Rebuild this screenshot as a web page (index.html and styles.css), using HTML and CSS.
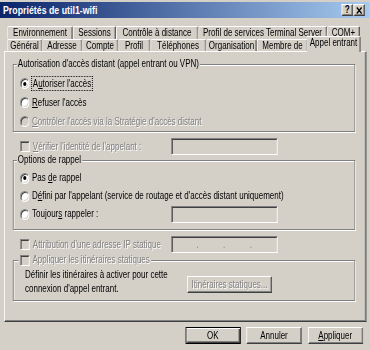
FILE: index.html
```html
<!DOCTYPE html>
<html>
	<head>
		<meta charset="utf-8" />
		<title>Propriétés de util1-wifi</title>
		<link rel="stylesheet" href="styles.css">
	</head>
	<body>
		<div id="screen">
		<div id="dialog">
			<div class="titlebar">
				<span class="caption">Propriétés de util1-wifi</span>
				<span class="tbtn">?</span>
				<span class="tbtn"><svg width="8" height="7" viewBox="0 0 8 7"><path d="M1 0.5L7 6.5M7 0.5L1 6.5" stroke="#000" stroke-width="1.6"/></svg></span>
			</div>
			<div class="tabs">
				<div class="tabrow back">
					<div class="tab">Environnement</div>
					<div class="tab">Sessions</div>
					<div class="tab">Contrôle à distance</div>
					<div class="tab">Profil de services Terminal Server</div>
					<div class="tab">COM+</div>
				</div>
				<div class="tabrow front">
					<div class="tab">Général</div>
					<div class="tab">Adresse</div>
					<div class="tab">Compte</div>
					<div class="tab">Profil</div>
					<div class="tab">Téléphones</div>
					<div class="tab">Organisation</div>
					<div class="tab">Membre de</div>
					<div class="tab sel">Appel entrant</div>
				</div>
			</div>
			<div class="panel">
				<div class="group">
					<div class="legend">Autorisation d'accès distant (appel entrant ou VPN)</div>
					<div class="opts">
						<div class="opt"><span class="radio on"></span><span class="focus">A<u>u</u>toriser l'accès</span></div>
						<div class="opt"><span class="radio"></span><span><u>R</u>efuser l'accès</span></div>
						<div class="opt dis"><span class="radio off"></span><span><u>C</u>ontrôler l'accès via la Stratégie d'accès distant</span></div>
					</div>
				</div>
				<div class="field">
					<div class="lw dis"><span class="check"></span><span><u>V</u>érifier l'identité de l'appelant :</span></div>
					<span class="edit"></span>
				</div>
				<div class="group g2">
					<div class="legend">Options de rappel</div>
					<div class="opts">
						<div class="opt"><span class="radio on"></span><span>Pas <u>d</u>e rappel</span></div>
						<div class="opt"><span class="radio"></span><span>D<u>é</u>fini par l'appelant (service de routage et d'accès distant uniquement)</span></div>
						<div class="opt">
							<div class="lw"><span class="radio"></span><span>Toujour<u>s</u> rappeler :</span></div>
							<span class="edit"></span>
						</div>
					</div>
				</div>
				<div class="field">
					<div class="lw dis"><span class="check"></span><span>Attribution d'une adresse IP statique</span></div>
					<span class="edit ip"><i>.</i><i>.</i><i>.</i></span>
				</div>
				<div class="group g3">
					<div class="legend dis"><span class="check"></span><span>Appliquer les itinéraires statiques</span></div>
					<div class="body">
						<p>Définir les itinéraires à activer pour cette<br>connexion d'appel entrant.</p>
						<button class="btn dis">Itinéraires statiques...</button>
					</div>
				</div>
			</div>
			<div class="buttons">
				<button class="btn default">OK</button>
				<button class="btn">Annuler</button>
				<button class="btn"><u>A</u>ppliquer</button>
			</div>
		</div>
		</div>
	</body>
</html>
```

FILE: styles.css
```css
*{
	margin: 0;
	padding: 0;
	box-sizing: border-box;
}
html, body{
	width: 370px;
	height: 350px;
	overflow: hidden;
	background: #d4d0c8;
}
body{
	font-family: "Liberation Sans", Arial, sans-serif;
	font-size: 10px;
	line-height: 12px;
	color: #000;
}
#screen{
	width: 370px;
	height: 350px;
	overflow: hidden;
}
/* the shot is squeezed sideways: lay the dialog out wider, then squeeze it back */
#dialog{
	width: 462px;
	height: 350px;
	padding-top: 2px;
	transform: scaleX(0.8);
	transform-origin: 0 0;
}
.titlebar{
	width: 462.4px;
	height: 16px;
	display: flex;
	align-items: center;
	padding: 0 6.25px 0 3.75px;
	background: linear-gradient(90deg, #0a246a, #a6caf0);
	color: #fff;
	font-size: 11px;
	font-weight: bold;
}
.caption{
	flex: 1;
}
.tbtn{
	width: 14px;
	height: 12px;
	margin-left: 1.25px;
	display: flex;
	align-items: center;
	justify-content: center;
	background: #d4d0c8;
	border: 1px solid;
	border-color: #fff #404040 #404040 #fff;
	box-shadow: inset -1px -1px #808080;
	color: #000;
	font-size: 10px;
	line-height: 10px;
}

/* tabs */
.tabs{
	margin-top: 8px;
	padding-left: 8.75px;
}
.tabrow{
	display: flex;
	align-items: flex-end;
}
.tab{
	height: 13px;
	line-height: 12px;
	text-align: center;
	white-space: nowrap;
	border: 1px solid #fff;
	border-right-color: #404040;
	border-bottom: 0;
	border-radius: 2px 2px 0 0;
	box-shadow: inset -1px 0 #808080;
	background: #d4d0c8;
}
.back .tab:nth-child(1){ width: 82.5px; }
.back .tab:nth-child(2){ width: 53.75px; }
.back .tab:nth-child(3){ width: 102.5px; }
.back .tab:nth-child(4){ width: 161.25px; }
.back .tab:nth-child(5){ width: 41.25px; }
.front .tab{
	height: 12px;
	line-height: 11px;
}
.front .tab:nth-child(1){ width: 43.75px; }
.front .tab:nth-child(2){ width: 50px; }
.front .tab:nth-child(3){ width: 45px; }
.front .tab:nth-child(4){ width: 40px; }
.front .tab:nth-child(5){ width: 70px; }
.front .tab:nth-child(6){ width: 63.75px; }
.front .tab:nth-child(7){ width: 63.75px; }
.front .tab.sel{
	width: 68.75px;
	height: 16px;
	margin: -3px -2.5px -1px;
	padding-bottom: 4px;
	z-index: 1;
}

/* page */
.panel{
	margin-left: 5px;
	width: 452.5px;
	height: 271px;
	border: 1px solid;
	border-color: #fff #404040 #404040 #fff;
	box-shadow: inset -1px -1px #808080;
	padding: 12px 12.75px 0 10.25px;
}
.group{
	border: 1px solid #808080;
	box-shadow: inset 1px 1px #fff, 1px 1px #fff;
	padding-left: 7.75px;
}
.legend{
	width: fit-content;
	margin: -7px 0 0 -4.25px;
	padding: 0 1.5px;
	line-height: 12px;
	background: #d4d0c8;
	white-space: nowrap;
}
.opts{
	padding-top: 4px;
}
.opt{
	display: flex;
	align-items: center;
	height: 19px;
	white-space: nowrap;
}
.g2{
	margin-top: 5px;
}
.g2 .opts{
	padding: 3px 0 6px;
}
.g2 .opt{
	height: 18px;
}
.g2 .lw{
	width: 188.75px;
}
.lw{
	display: flex;
	align-items: center;
	flex: none;
	white-space: nowrap;
}
.field{
	display: grid;
	grid-template-columns: 197.5px 133px;
	align-items: center;
	margin-top: 6px;
}
.field .lw{
	padding-left: 8.75px;
}
.dis{
	color: #808080;
	text-shadow: 1px 1px #fff;
}

.radio{
	width: 12px;
	height: 11px;
	margin-right: 3px;
	flex: none;
	display: flex;
	align-items: center;
	justify-content: center;
	border-radius: 50%;
	border: 1px solid;
	border-color: #808080 #fff #fff #808080;
	box-shadow: inset 1px 1px #404040, inset -1px -1px #d4d0c8;
	background: #fff;
}
.radio.on::after{
	content: "";
	width: 4px;
	height: 4px;
	border-radius: 50%;
	background: #000;
}
.radio.off{
	background: #d4d0c8;
}
.check{
	width: 12px;
	height: 11px;
	margin-right: 4px;
	flex: none;
	border: 1px solid;
	border-color: #808080 #fff #fff #808080;
	box-shadow: inset 1px 1px #404040, inset -1px -1px #d4d0c8;
	background: #d4d0c8;
}
.focus{
	outline: 1px dotted #000;
	padding: 0 1px;
	line-height: 13px;
}
.edit{
	height: 17px;
	width: 133px;
	border: 1px solid;
	border-color: #808080 #fff #fff #808080;
	box-shadow: inset 1px 1px #404040, inset -1px -1px #d4d0c8;
	background: #d4d0c8;
}
.edit.ip{
	display: flex;
	justify-content: space-evenly;
	align-items: center;
	color: #808080;
	line-height: 8px;
}
.edit.ip i{
	font-style: normal;
}

.g3{
	margin-top: 7px;
}
.g3 .legend{
	display: flex;
	align-items: center;
	margin-left: -2.5px;
	padding: 0 2px;
}
.g3 .body{
	display: flex;
	align-items: flex-start;
	margin-top: 2px;
	padding: 0 0 4px 6.25px;
	line-height: 14px;
}
.g3 p{
	width: 202.5px;
}
.g3 .btn{
	width: 106.25px;
	margin-top: 8px;
}

/* buttons */
.buttons{
	display: flex;
	justify-content: flex-end;
	gap: 7.5px;
	margin-top: 5px;
	padding-right: 8.5px;
}
.btn{
	width: 69px;
	height: 17px;
	display: flex;
	align-items: center;
	justify-content: center;
	font: inherit;
	line-height: 12px;
	color: #000;
	background: #d4d0c8;
	border: 1px solid;
	border-color: #fff #404040 #404040 #fff;
	box-shadow: inset -1px -1px #808080;
	white-space: nowrap;
}
.btn.dis{
	color: #808080;
}
.btn.default{
	border-color: #000;
	box-shadow: inset 1px 1px #fff, inset -1px -1px #404040, inset -2px -2px #808080;
}
```
